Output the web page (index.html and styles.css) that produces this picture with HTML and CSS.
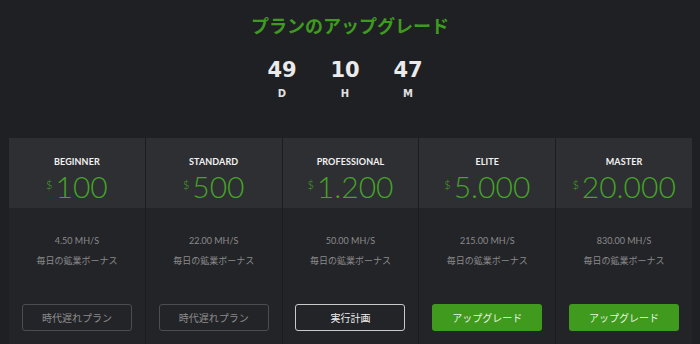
FILE: index.html
```html
<!DOCTYPE html>
<html lang="ja">
	<head>
		<meta charset="UTF-8">
		<title>プランのアップグレード</title>
		<link rel="stylesheet" href="styles.css">
	</head>
	<body>
		<div class="page">
			<h1 class="title">プランのアップグレード</h1>
			<div class="countdown">
				<div class="unit"><span class="num">49</span><span class="lbl">D</span></div>
				<div class="unit"><span class="num">10</span><span class="lbl">H</span></div>
				<div class="unit"><span class="num">47</span><span class="lbl">M</span></div>
			</div>
			<div class="plans">
				<div class="plan">
					<div class="head">
						<div class="name">BEGINNER</div>
						<div class="price"><sup>$</sup>100</div>
					</div>
					<div class="body">
						<div class="speed">4.50 MH/S</div>
						<div class="bonus">毎日の鉱業ボーナス</div>
						<button class="btn old">時代遅れプラン</button>
					</div>
				</div>
				<div class="plan">
					<div class="head">
						<div class="name">STANDARD</div>
						<div class="price"><sup>$</sup>500</div>
					</div>
					<div class="body">
						<div class="speed">22.00 MH/S</div>
						<div class="bonus">毎日の鉱業ボーナス</div>
						<button class="btn old">時代遅れプラン</button>
					</div>
				</div>
				<div class="plan">
					<div class="head">
						<div class="name">PROFESSIONAL</div>
						<div class="price"><sup>$</sup>1.200</div>
					</div>
					<div class="body">
						<div class="speed">50.00 MH/S</div>
						<div class="bonus">毎日の鉱業ボーナス</div>
						<button class="btn current">実行計画</button>
					</div>
				</div>
				<div class="plan">
					<div class="head">
						<div class="name">ELITE</div>
						<div class="price"><sup>$</sup>5.000</div>
					</div>
					<div class="body">
						<div class="speed">215.00 MH/S</div>
						<div class="bonus">毎日の鉱業ボーナス</div>
						<button class="btn upgrade">アップグレード</button>
					</div>
				</div>
				<div class="plan">
					<div class="head">
						<div class="name">MASTER</div>
						<div class="price"><sup>$</sup>20.000</div>
					</div>
					<div class="body">
						<div class="speed">830.00 MH/S</div>
						<div class="bonus">毎日の鉱業ボーナス</div>
						<button class="btn upgrade">アップグレード</button>
					</div>
				</div>
			</div>
		</div>
	</body>
</html>
```

FILE: styles.css
```css
body, html { margin: 0; padding: 0; background: #1f2023; font-family: "Lato", "Noto Sans CJK JP", sans-serif; }
.page { height: 344px; overflow: hidden; text-align: center; }
.title { margin: 0; padding-top: 14px; font-size: 18px; line-height: 22px; font-weight: bold; color: #3e9b1f; font-family: "Noto Sans CJK JP", sans-serif; }
.countdown { display: flex; justify-content: center; gap: 27px; margin-top: 22px; padding-right: 10px; }
.unit { display: flex; flex-direction: column; align-items: center; width: 36px; }
.num { font-family: "DejaVu Sans", sans-serif; font-size: 21px; line-height: 24px; font-weight: bold; color: #ebebeb; }
.lbl { font-family: "DejaVu Sans", sans-serif; font-size: 10px; line-height: 12px; font-weight: bold; color: #e0e0e0; margin-top: 6px; }
.plans { display: grid; grid-template-columns: repeat(5, 1fr); gap: 1px; margin: 38px 8px 0 9px; background: #1b1c1e; }
.plan { display: flex; flex-direction: column; }
.head { height: 70px; background: #2e2f33; box-sizing: border-box; padding-top: 18px; }
.name { font-size: 9px; line-height: 11px; font-weight: bold; color: #f2f2f2; letter-spacing: 0.1px; }
.price { font-size: 30px; line-height: 32px; font-weight: 300; color: #45a425; margin-top: 3px; }
.price sup { font-size: 11px; vertical-align: top; position: relative; top: -1px; margin-right: 3px; }
.body { background: #232428; height: 140px; padding-top: 27px; box-sizing: border-box; }
.speed { font-size: 9px; line-height: 12px; color: #8a8a8a; }
.bonus { font-size: 9px; line-height: 12px; color: #8a8a8a; margin-top: 8px; font-family: "Noto Sans CJK JP", sans-serif; }
.btn {
	display: block;
	width: 110px;
	height: 27px;
	margin: 37px auto 0;
	border-radius: 3px;
	font-family: "Noto Sans CJK JP", sans-serif;
	font-size: 10px;
	background: transparent;
	cursor: pointer;
}
.btn.old { border: 1px solid #4c4d51; color: #8c8c8c; }
.btn.current { border: 1px solid #c9c9c9; color: #f0f0f0; }
.btn.upgrade { border: none; background: #3f9a1e; color: #eaf5e3; }
```
